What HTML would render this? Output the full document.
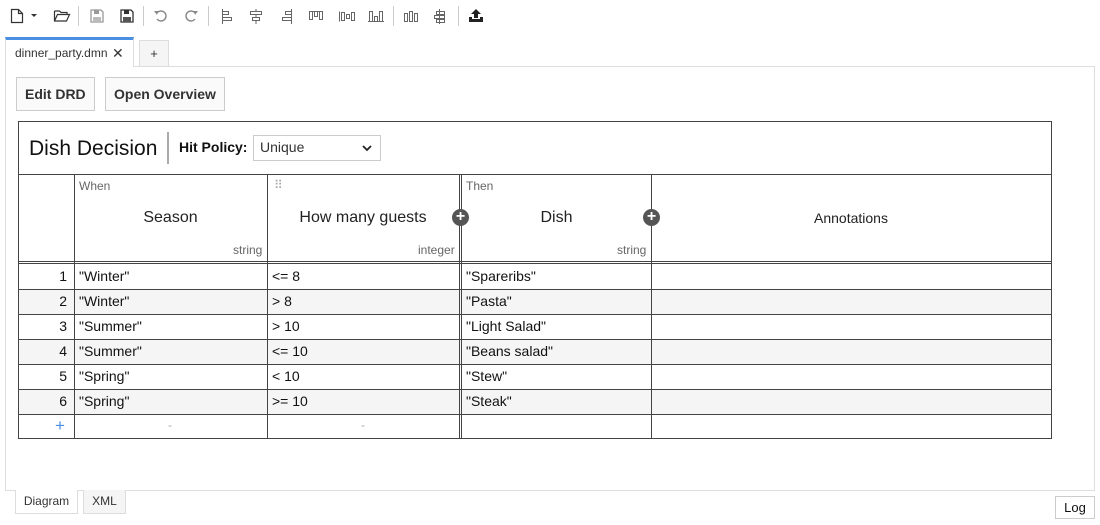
<!DOCTYPE html>
<html><head><style>
*{margin:0;padding:0;box-sizing:border-box}
body{width:1100px;height:525px;background:#fff;font-family:"Liberation Sans",Arial,sans-serif;position:relative;overflow:hidden;color:#222}
.a{position:absolute}
.sep{position:absolute;top:6px;width:1px;height:20px;background:#ccc}
.ic{position:absolute;top:8px}
.btn{position:absolute;top:77px;height:34px;border:1px solid #ccc;background:#fafafa;font-weight:bold;font-size:14px;line-height:32px;padding:0 8px;color:#333}
.v{position:absolute;width:1px;background:#444}
.h{position:absolute;height:1px;background:#444;left:18px;width:1034px}
.c{position:absolute;font-size:14px;line-height:25px;color:#111}
.g{position:absolute;left:19px;width:1032px;height:24px;background:#f5f5f5}
.plus{position:absolute;width:17px;height:17px;border-radius:50%;background:#555;color:#fff;font-size:16px;line-height:16px;text-align:center;font-weight:bold}
</style></head><body>
<!-- toolbar -->
<svg class="ic" style="left:10px" width="30" height="16"><path d="M1.5 1.5h7l4 4v9h-11z M8.5 1.5v4h4" fill="none" stroke="#333" stroke-width="1.2"/><path d="M21 6h6l-3 3z" fill="#333"/></svg>
<svg class="ic" style="left:53px" width="18" height="16"><path d="M1.5 3h5l1.5 1.5h6v2 M1.5 3v10h12l3-6.5h-12l-3 6.5" fill="none" stroke="#333" stroke-width="1.2"/></svg>
<div class="sep" style="left:78px"></div>
<svg class="ic" style="left:89px" width="16" height="16"><path d="M2 2h10l2 2v10h-12z" fill="none" stroke="#999" stroke-width="1.3"/><rect x="5" y="2" width="5" height="4" fill="#999"/><rect x="4" y="9" width="8" height="5" fill="#bbb"/></svg>
<svg class="ic" style="left:119px" width="16" height="16"><path d="M2 2h10l2 2v10h-12z" fill="none" stroke="#333" stroke-width="1.3"/><rect x="5" y="2" width="5" height="4" fill="#333"/><rect x="4" y="9" width="8" height="5" fill="#555"/></svg>
<div class="sep" style="left:143px"></div>
<svg class="ic" style="left:153px" width="16" height="16"><path d="M4 5a5 5 0 1 1 0 6" fill="none" stroke="#888" stroke-width="1.4"/><path d="M1 3l4 0l-1 4z" fill="#888"/></svg>
<svg class="ic" style="left:183px" width="16" height="16"><path d="M12 5a5 5 0 1 0 0 6" fill="none" stroke="#888" stroke-width="1.4"/><path d="M15 3l-4 0l1 4z" fill="#888"/></svg>
<div class="sep" style="left:208px"></div>
<svg class="ic" style="left:219px" width="120" height="18" fill="none" stroke="#666" stroke-width="1"><path d="M3.5 1v15M3.5 3.5h6v3h-6M3.5 9.5h9v3h-9"/><path d="M37 1v3M37 7v3M37 13v3M31.5 3.5h11v3h-11zM33.5 9.5h7v3h-7z"/><path d="M72.5 1v15M72.5 3.5h-6v3h6M72.5 9.5h-9v3h9"/><path d="M90.5 3.5h3v8h-3zM95.5 3.5h3v5h-3zM100.5 3.5h3v8h-3zM90 3.5h14"/></svg>
<svg class="ic" style="left:338px" width="50" height="18" fill="none" stroke="#666" stroke-width="1"><path d="M1.5 3.5v10M3.5 4.5h3v8h-3zM8.5 6.5h3v4h-3zM13.5 4.5h3v8h-3z"/><path d="M31.5 3.5h3v10h-3zM36.5 8.5h3v5h-3zM41.5 3.5h3v10h-3zM30 13.5h16"/></svg>
<div class="sep" style="left:393px"></div>
<svg class="ic" style="left:403px" width="50" height="18" fill="none" stroke="#666" stroke-width="1"><path d="M1.5 5.5h3v8h-3zM6.5 3.5h3v10h-3zM11.5 5.5h3v8h-3z"/><path d="M36.5 1v15M33.5 3.5h8v3h-8zM31.5 7.5h10v3h-10zM33.5 11.5h8v3h-8z"/></svg>
<div class="sep" style="left:458px"></div>
<svg class="ic" style="left:468px" width="16" height="16"><path d="M8 1l5 5h-3v4h-4v-4h-3z" fill="#222"/><path d="M1 9v5h14v-5h-3v2h-8v-2z" fill="#222"/></svg>
<!-- tabs -->
<div class="a" style="left:5px;top:37px;width:129px;height:30px;border:1px solid #ddd;border-top:3px solid #4a90e2;border-bottom:none;background:#fff;font-size:12px;line-height:27px;padding-left:9px;color:#333;white-space:nowrap;z-index:2">dinner_party.dmn<span style="position:absolute;left:106px;top:0;font-size:14px">✕</span></div>
<div class="a" style="left:139px;top:40px;width:30px;height:27px;border:1px solid #ddd;background:#f5f5f5;font-size:13px;text-align:center;line-height:25px;color:#333">+</div>
<div class="a" style="left:5px;top:66px;width:1090px;height:425px;border:1px solid #ddd"></div>
<div class="btn" style="left:16px">Edit DRD</div>
<div class="btn" style="left:105px">Open Overview</div>
<!-- table -->
<div class="a" style="left:18px;top:121px;width:1034px;height:318px;border:1px solid #444"></div>
<div class="a" style="left:29px;top:137px;font-size:21px;color:#111">Dish Decision</div>
<div class="a" style="left:167px;top:132px;width:2px;height:32px;background:#aaa"></div>
<div class="a" style="left:179px;top:139px;font-size:14px;font-weight:bold;color:#111">Hit Policy:</div>
<div class="a" style="left:253px;top:135px;width:128px;height:26px;border:1px solid #ccc;font-size:14px;line-height:23px;padding-left:6px;color:#333">Unique<svg style="position:absolute;right:8px;top:9px" width="10" height="7"><path d="M1 1l4 4 4-4" fill="none" stroke="#222" stroke-width="1.8"/></svg></div>
<div class="h" style="top:174px"></div>
<div class="g" style="top:290px"></div><div class="g" style="top:340px"></div><div class="g" style="top:390px"></div>
<div class="h" style="top:261px"></div><div class="h" style="top:263px"></div>
<div class="h" style="top:289px"></div><div class="h" style="top:314px"></div><div class="h" style="top:339px"></div><div class="h" style="top:364px"></div><div class="h" style="top:389px"></div><div class="h" style="top:414px"></div>
<div class="v" style="left:74px;top:174px;height:264px"></div>
<div class="v" style="left:267px;top:174px;height:264px"></div>
<div class="v" style="left:459px;top:174px;height:264px"></div>
<div class="v" style="left:461px;top:174px;height:264px"></div>
<div class="v" style="left:651px;top:174px;height:264px"></div>
<div class="a" style="left:79px;top:179px;font-size:12px;color:#666">When</div>
<div class="a" style="left:274px;top:178px;font-size:12px;color:#aaa;letter-spacing:-1px">⠿</div>
<div class="a" style="left:466px;top:179px;font-size:12px;color:#666">Then</div>
<div class="a" style="left:74px;width:193px;top:209px;text-align:center;font-size:16px">Season</div>
<div class="a" style="left:267px;width:192px;top:209px;text-align:center;font-size:16px">How many guests</div>
<div class="a" style="left:462px;width:189px;top:209px;text-align:center;font-size:16px">Dish</div>
<div class="a" style="left:651px;width:400px;top:210px;text-align:center;font-size:14px">Annotations</div>
<div class="a" style="left:233px;top:243px;font-size:12px;color:#666">string</div>
<div class="a" style="left:418px;top:243px;font-size:12px;color:#666">integer</div>
<div class="a" style="left:617px;top:243px;font-size:12px;color:#666">string</div>
<div class="plus" style="left:452px;top:209px">+</div>
<div class="plus" style="left:643px;top:209px">+</div>
<div class="c" style="left:19px;width:48px;text-align:right;top:264px">1<br>2<br>3<br>4<br>5<br>6</div>
<div class="c" style="left:79px;top:264px">"Winter"<br>"Winter"<br>"Summer"<br>"Summer"<br>"Spring"<br>"Spring"</div>
<div class="c" style="left:272px;top:264px">&lt;= 8<br>&gt; 8<br>&gt; 10<br>&lt;= 10<br>&lt; 10<br>&gt;= 10</div>
<div class="c" style="left:466px;top:264px">"Spareribs"<br>"Pasta"<br>"Light Salad"<br>"Beans salad"<br>"Stew"<br>"Steak"</div>
<div class="a" style="left:55px;top:416px;font-size:17px;color:#4a90e2">+</div>
<div class="a" style="left:168px;top:418px;font-size:12px;color:#aaa">-</div>
<div class="a" style="left:361px;top:418px;font-size:12px;color:#aaa">-</div>
<!-- bottom tabs -->
<div class="a" style="left:15px;top:490px;width:63px;height:24px;border:1px solid #ddd;border-top:none;background:#fff;font-size:12px;text-align:center;line-height:23px;color:#333">Diagram</div>
<div class="a" style="left:83px;top:490px;width:43px;height:24px;border:1px solid #ddd;border-top:none;background:#f5f5f5;font-size:12px;text-align:center;line-height:23px;color:#333">XML</div>
<div class="a" style="left:1055px;top:496px;width:40px;height:23px;border:1px solid #ccc;background:#fff;font-size:13px;text-align:center;line-height:21px;color:#111">Log</div>
</body></html>
